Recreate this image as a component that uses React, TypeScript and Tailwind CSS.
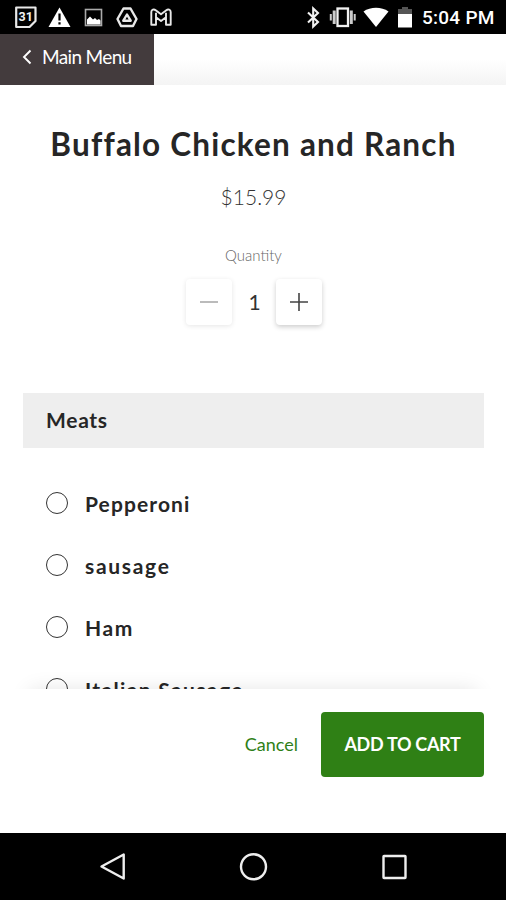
import type { ReactNode } from "react";

function StatusBar() {
  return (
    <div className="flex h-[34px] shrink-0 items-center justify-between bg-black pr-[11px] pl-[15px] text-white">
      <svg width="160" height="34" viewBox="15 0 160 34" fill="none" stroke="#e8e8e8">
        <path d="M16.200 7.500h19.300v13.500l-6 6H16.200z" strokeWidth="2.200" strokeLinejoin="round" />
        <text x="25.700" y="21.400" fill="#f2f2f2" stroke="none" fontFamily="Roboto, sans-serif" fontSize="12.500" fontWeight="700" textAnchor="middle">31</text>
        <path d="M59.500 7.500 70.500 27h-22z" fill="#fff" stroke="none" />
        <path d="M59.500 13.500v7M59.500 22.300v2.200" stroke="#000" strokeWidth="2.200" />
        <rect x="85.500" y="9.500" width="16" height="16" stroke="#aaa" strokeWidth="1.600" />
        <path d="M87 24.500v-5l3-3 3 3 2-1.500 2 2 2-1 1.500 1.500v4z" fill="#fff" stroke="none" />
        <path d="M123.500 8.500h7l6 10.500-3.500 7h-12l-3.500-7z" strokeWidth="2.400" strokeLinejoin="round" />
        <path d="M127 14.500l3.700 6.200h-7.400z" strokeWidth="2.400" strokeLinejoin="round" />
        <path d="M151.300 12c0-2.600 2.600-3.200 4.400-1.800l5.300 4.100 5.300-4.100c1.800-1.400 4.400-.8 4.400 1.800v12.700h-4.700v-7.500l-5 3.800-5-3.800v7.500h-4.700zM156 17.200v-4.500M166 17.200v-4.500" strokeWidth="1.900" strokeLinejoin="round" />
      </svg>
      <div className="flex items-center">
        <svg width="110" height="34" viewBox="305 0 110 34" fill="none" stroke="#f2f2f2">
          <path d="m308 12.500 10 9.500-4.800 4.500v-18l4.800 4.500-10 9.500" strokeWidth="2.100" />
          <rect x="337.500" y="8.500" width="10.500" height="17.500" strokeWidth="2.300" />
          <path d="M334.200 10.500v13.500M351.300 10.500v13.500" stroke="#ccc" strokeWidth="3" />
          <path d="M330.800 14v6.500M354.700 14v6.500" stroke="#ccc" strokeWidth="2" />
          <path d="M363.500 11.500C370.500 6.500 381.500 6.500 388.500 11.500L376 27z" fill="#fff" stroke="none" />
          <path d="M398 14V9h4V7h6v2h4v5z" fill="#555" stroke="none" />
          <path d="M398 14h14v13.500h-14z" fill="#fff" stroke="none" />
        </svg>
        <span className="w-20 pt-0.5 pl-[7px] font-['Roboto',sans-serif] text-[19px] leading-8 font-medium tracking-[0.25px] whitespace-nowrap">5:04 PM</span>
      </div>
    </div>
  );
}

function StepButton({ disabled = false, children }: { disabled?: boolean; children: ReactNode }) {
  return (
    <button
      className={
        disabled
          ? "flex size-[46px] items-center justify-center rounded-sm bg-white text-[#aaa] shadow-[0_1px_5px_rgba(0,0,0,0.10)]"
          : "flex size-[46px] items-center justify-center rounded-sm bg-white text-[#444] shadow-[0_2px_5px_rgba(0,0,0,0.20)]"
      }
    >
      <svg width="18" height="18" viewBox="0 0 18 18" stroke="currentColor" strokeWidth="1.600">
        {children}
      </svg>
    </button>
  );
}

function Topping({ name, tracking }: { name: string; tracking: string }) {
  return (
    <label className="flex h-[62px] items-center gap-[17px]">
      <span className="size-[22px] shrink-0 rounded-full border-[1.5px] border-[#333]" />
      <span className={`pt-0.5 text-[21px] leading-7 font-bold whitespace-nowrap ${tracking}`}>{name}</span>
    </label>
  );
}

export default function App() {
  return (
    <div className="flex h-[900px] w-[506px] flex-col overflow-hidden bg-white font-['Lato',sans-serif] text-[#262626]">
      <StatusBar />
      <header className="flex h-[51px] shrink-0 bg-linear-to-b from-white from-50% to-[#f4f4f4]">
        <button className="flex h-[51px] w-[154px] items-center bg-[#433b3d] pb-[5px] pl-[22px] text-white">
          <svg width="10" height="16" viewBox="0 0 10 16" fill="none" stroke="currentColor" strokeWidth="1.900">
            <path d="M8.500 1.500 2 8l6.500 6.500" />
          </svg>
          <span className="pl-[10px] text-[19px] leading-6 tracking-[-0.65px] whitespace-nowrap">Main Menu</span>
        </button>
      </header>

      <main className="flex h-[604px] shrink-0 flex-col overflow-hidden bg-white px-[22px] pl-[23px]">
        <h1 className="mt-[39px] self-center text-[31.5px] leading-10 font-bold tracking-[1.2px] whitespace-nowrap">Buffalo Chicken and Ranch</h1>
        <p className="mt-[19px] self-center text-[21px] leading-7 font-light text-[#333]">$15.99</p>
        <p className="mt-[34px] self-center text-[15px] leading-5 font-light text-[#666]">Quantity</p>
        <div className="mt-[14px] flex items-center justify-center gap-[17px]">
          <StepButton disabled>
            <path d="M0 9h18" />
          </StepButton>
          <span className="w-[10px] text-center text-[21px] leading-7 text-[#333]">1</span>
          <StepButton>
            <path d="M0 9h18M9 0v18" />
          </StepButton>
        </div>
        <h2 className="mt-[68px] h-[55px] shrink-0 bg-[#eee] pl-[23px] text-[21px] leading-[53px] font-bold tracking-[0.7px]">Meats</h2>
        <div className="mt-[24px] flex flex-col pl-[23px]">
          <Topping name="Pepperoni" tracking="tracking-[1.1px]" />
          <Topping name="sausage" tracking="tracking-[1.7px]" />
          <Topping name="Ham" tracking="tracking-[1.6px]" />
          <Topping name="Italian Sausage" tracking="tracking-[1.35px]" />
        </div>
      </main>

      <footer className="flex h-[144px] shrink-0 items-start justify-end bg-white pt-[23px] pr-[22px] shadow-[0_-28px_20px_-30px_rgba(0,0,0,0.12)]">
        <button className="mr-[23px] h-[65px] text-[18px] whitespace-nowrap text-[#2f8018]">Cancel</button>
        <button className="h-[65px] w-[163px] rounded bg-[#2f8015] text-[18px] font-bold tracking-[-0.3px] whitespace-nowrap text-white">ADD TO CART</button>
      </footer>

      <nav className="h-[67px] shrink-0 bg-black">
        <svg width="506" height="67" viewBox="0 833 506 67" fill="none" stroke="#eee" strokeWidth="2.400">
          <path d="M101.500 866.500 123.700 854.500v24z" strokeLinejoin="round" />
          <circle cx="253.500" cy="866.800" r="12.500" />
          <rect x="383.500" y="856" width="22" height="22" rx="0.500" />
        </svg>
      </nav>
    </div>
  );
}
